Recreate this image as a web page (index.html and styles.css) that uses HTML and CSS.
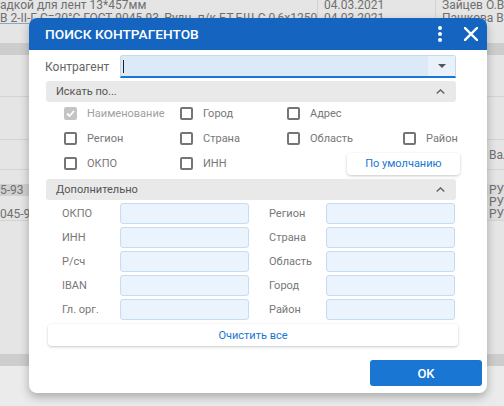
FILE: index.html
```html
<!DOCTYPE html>
<html lang="ru">
<head>
<meta charset="utf-8">
<title>Поиск контрагентов</title>
<link rel="stylesheet" href="styles.css">
</head>
<body>
<div class="bg">
  <div class="trow"><span class="c1">адкой для лент 13*457мм</span><span class="c2">04.03.2021</span><span class="c3">Зайцев О.В.</span></div>
  <div class="trow r2"><span class="c1 ul">В 2-II-Г С=20°С ГОСТ 9045-93, Рудн. п/к БТ-БШ-С 0,6х1250</span><span class="c2">04.03.2021</span><span class="c3">Пашкова В.</span></div>
  <div class="blk h19"></div>
  <div class="blk band h12"></div>
  <div class="blk line h42"></div>
  <div class="blk line h43"></div>
  <div class="blk line h30"><span class="rt">Валюта</span></div>
  <div class="blk h14"></div>
  <div class="srow dark"><span class="lt">5-93</span><span class="rt">РУБ</span></div>
  <div class="srow"><span class="lt"></span><span class="rt">РУБ</span></div>
  <div class="srow last"><span class="lt">045-9</span><span class="rt">РУБ</span></div>
  <div class="blk h133"></div>
  <div class="blk band h12"></div>
</div>

<div class="dialog">
  <div class="dlg-head">
    <span class="title">ПОИСК КОНТРАГЕНТОВ</span>
    <svg class="dots" width="4" height="16" viewBox="0 0 4 16"><circle cx="2" cy="2" r="2" fill="#fff"/><circle cx="2" cy="8" r="2" fill="#fff"/><circle cx="2" cy="14" r="2" fill="#fff"/></svg>
    <svg class="close" width="14" height="14" viewBox="0 0 14 14"><path d="M1 1 L13 13 M13 1 L1 13" stroke="#fff" stroke-width="2.4" stroke-linecap="square"/></svg>
  </div>
  <div class="dlg-body">
    <div class="main-row">
      <span class="main-label">Контрагент</span>
      <div class="combo">
        <div class="combo-text"><span class="cursor"></span></div>
        <div class="combo-drop"><svg width="8" height="4" viewBox="0 0 8 4"><path d="M0 0 H8 L4 4 Z" fill="#555"/></svg></div>
      </div>
    </div>

    <div class="sect"><span>Искать по...</span><svg width="9" height="5" viewBox="0 0 9 5"><path d="M0.7 4.5 L4.5 0.9 L8.3 4.5" fill="none" stroke="#666" stroke-width="1.4"/></svg></div>

    <div class="checks">
      <label class="chk disabled"><span class="box checked"><svg width="9" height="7" viewBox="0 0 9 7"><path d="M1 3.5 L3.5 6 L8 1" fill="none" stroke="#fff" stroke-width="1.8"/></svg></span>Наименование</label>
      <label class="chk"><span class="box"></span>Город</label>
      <label class="chk"><span class="box"></span>Адрес</label>
      <span></span>
      <label class="chk"><span class="box"></span>Регион</label>
      <label class="chk"><span class="box"></span>Страна</label>
      <label class="chk"><span class="box"></span>Область</label>
      <label class="chk"><span class="box"></span>Район</label>
      <label class="chk"><span class="box"></span>ОКПО</label>
      <label class="chk"><span class="box"></span>ИНН</label>
      <button class="btn-default">По умолчанию</button>
    </div>

    <div class="sect"><span>Дополнительно</span><svg width="9" height="5" viewBox="0 0 9 5"><path d="M0.7 4.5 L4.5 0.9 L8.3 4.5" fill="none" stroke="#666" stroke-width="1.4"/></svg></div>

    <div class="fields">
      <span class="flabel">ОКПО</span><span class="finput"></span><span class="flabel r">Регион</span><span class="finput"></span>
      <span class="flabel">ИНН</span><span class="finput"></span><span class="flabel r">Страна</span><span class="finput"></span>
      <span class="flabel">Р/сч</span><span class="finput"></span><span class="flabel r">Область</span><span class="finput"></span>
      <span class="flabel">IBAN</span><span class="finput"></span><span class="flabel r">Город</span><span class="finput"></span>
      <span class="flabel">Гл. орг.</span><span class="finput"></span><span class="flabel r">Район</span><span class="finput"></span>
    </div>

    <button class="btn-clear">Очистить все</button>
  </div>
  <div class="dlg-foot">
    <button class="btn-ok">OK</button>
  </div>
</div>
</body>
</html>
```

FILE: styles.css
```css
* { box-sizing: border-box; }

body {
  margin: 0;
  width: 504px;
  height: 406px;
  overflow: hidden;
  position: relative;
  background: #ebebeb;
  font-family: Roboto, "Noto Sans", sans-serif;
}

/* dimmed background table */
.bg {
  background: #e5e5e5;
  color: #707070;
  font-size: 12px;
}
.trow {
  display: grid;
  grid-template-columns: 317px 118px 1fr;
  height: 12px;
  line-height: 11px;
  white-space: nowrap;
  overflow: hidden;
}
.trow.r2 { line-height: 13px; }
.trow span {
  overflow: hidden;
  padding-left: 6px;
  border-left: 1px solid #d3d3d3;
}
.trow .c1 { padding-left: 0; border-left: 0; }
.trow .ul { text-decoration: underline; text-decoration-color: #8fa6c6; }

.blk { position: relative; }
.h19 { height: 19px; }
.h12 { height: 12px; }
.h42 { height: 42px; }
.h43 { height: 43px; }
.h30 { height: 30px; }
.h14 { height: 14px; }
.h133 { height: 133px; }
.band { background: #cdcdcd; }
.line { border-bottom: 1px solid #d4d4d4; }
.h30 { display: flex; align-items: center; }
.h30 .rt { margin-left: 489px; }

.rt {
  white-space: nowrap;
  overflow: hidden;
  width: 15px;
}
.lt {
  width: 29px;
  white-space: nowrap;
  overflow: hidden;
}
.srow {
  display: flex;
  height: 12px;
  line-height: 12px;
  font-size: 12px;
}
.srow .rt { margin-left: 460px; background: #dedede; }
.srow.dark {
  background: linear-gradient(#dedede, #dedede) right / 17px 100% no-repeat, #d0d0d0;
}
.srow.last { border-bottom: 1px solid #d4d4d4; height: 13px; }

/* dialog */
.dialog {
  position: absolute;
  left: 29px;
  top: 18px;
  width: 458px;
  height: 375px;
  background: #fff;
  border-radius: 8px;
  box-shadow: 0 4px 10px rgba(0, 0, 0, 0.28);
  overflow: hidden;
  display: flex;
  flex-direction: column;
}
.dlg-head {
  height: 32px;
  flex: none;
  background: #1565c0;
  color: #fff;
  display: flex;
  align-items: center;
  padding: 0 9px 0 16px;
}
.title {
  flex: 1;
  font-size: 13.7px;
  font-weight: 500;
}
.dots { margin-right: 22px; }

.dlg-body {
  flex: 1;
  padding: 5px 31px 0 17px;
}
.main-row {
  display: flex;
  align-items: center;
  height: 23px;
}
.main-label {
  width: 74px;
  font-size: 12px;
  color: #666;
  margin-left: -1px;
}
.combo {
  flex: 1;
  height: 23px;
  display: flex;
  background: #dce9f7;
  border: 1px solid #c3d9f1;
  border-bottom: 2px solid #1976d2;
  border-radius: 3px 3px 0 0;
  margin-left: 1px;
}
.combo-text {
  flex: 1;
  display: flex;
  align-items: center;
  padding-left: 2px;
}
.cursor {
  width: 1px;
  height: 13px;
  background: #222;
}
.combo-drop {
  width: 27px;
  background: #e9f1fb;
  display: flex;
  align-items: center;
  justify-content: center;
}

.sect {
  margin-top: 3px;
  height: 21px;
  background: #e9e9e9;
  border-radius: 3px;
  display: flex;
  align-items: center;
  justify-content: space-between;
  padding: 0 11px 0 10px;
  font-size: 11px;
  color: #555;
}

.checks {
  display: grid;
  grid-template-columns: 116px 107px 116px 1fr;
  grid-auto-rows: 25px;
  align-items: center;
  padding-left: 18px;
  margin-top: -1px;
}
.chk {
  display: flex;
  align-items: center;
  gap: 10px;
  font-size: 11px;
  color: #777;
}
.chk.disabled { color: #a0a0a0; }
.box {
  width: 13px;
  height: 13px;
  border: 2px solid #757575;
  border-radius: 2px;
  display: flex;
  align-items: center;
  justify-content: center;
  flex: none;
}
.box.checked {
  background: #c4c4c4;
  border-color: #c4c4c4;
}
.btn-default {
  grid-column: 3 / 5;
  justify-self: end;
  width: 113px;
  height: 22px;
  margin-right: -2px;
  border: 0;
  border-radius: 4px;
  background: #fff;
  box-shadow: 0 1px 3px rgba(0, 0, 0, 0.22);
  color: #1976d2;
  font-family: inherit;
  font-size: 11px;
  padding: 0;
}

.fields {
  display: grid;
  grid-template-columns: 74px 129px 77px 129px;
  grid-auto-rows: 21px;
  row-gap: 3px;
  align-items: center;
  margin-top: 3px;
}
.flabel {
  font-size: 11px;
  color: #777;
  padding-left: 16px;
}
.flabel.r { padding-left: 20px; }
.finput {
  height: 21px;
  background: #ebf3fd;
  border: 1px solid #c4dcf5;
  border-radius: 3px;
}

.btn-clear {
  display: block;
  margin: 4px 0 0 2px;
  width: 410px;
  height: 22px;
  border: 0;
  border-radius: 4px;
  background: #fff;
  box-shadow: 0 1px 3px rgba(0, 0, 0, 0.22);
  color: #1976d2;
  font-family: inherit;
  font-size: 11px;
  padding: 0;
}

.dlg-foot {
  flex: none;
  display: flex;
  justify-content: flex-end;
  padding: 0 5px 7px 0;
}
.btn-ok {
  width: 112px;
  height: 26px;
  border: 0;
  border-radius: 3px;
  background: #1976d2;
  color: #fff;
  font-family: inherit;
  font-size: 13px;
  font-weight: 500;
  padding: 0;
}
```
